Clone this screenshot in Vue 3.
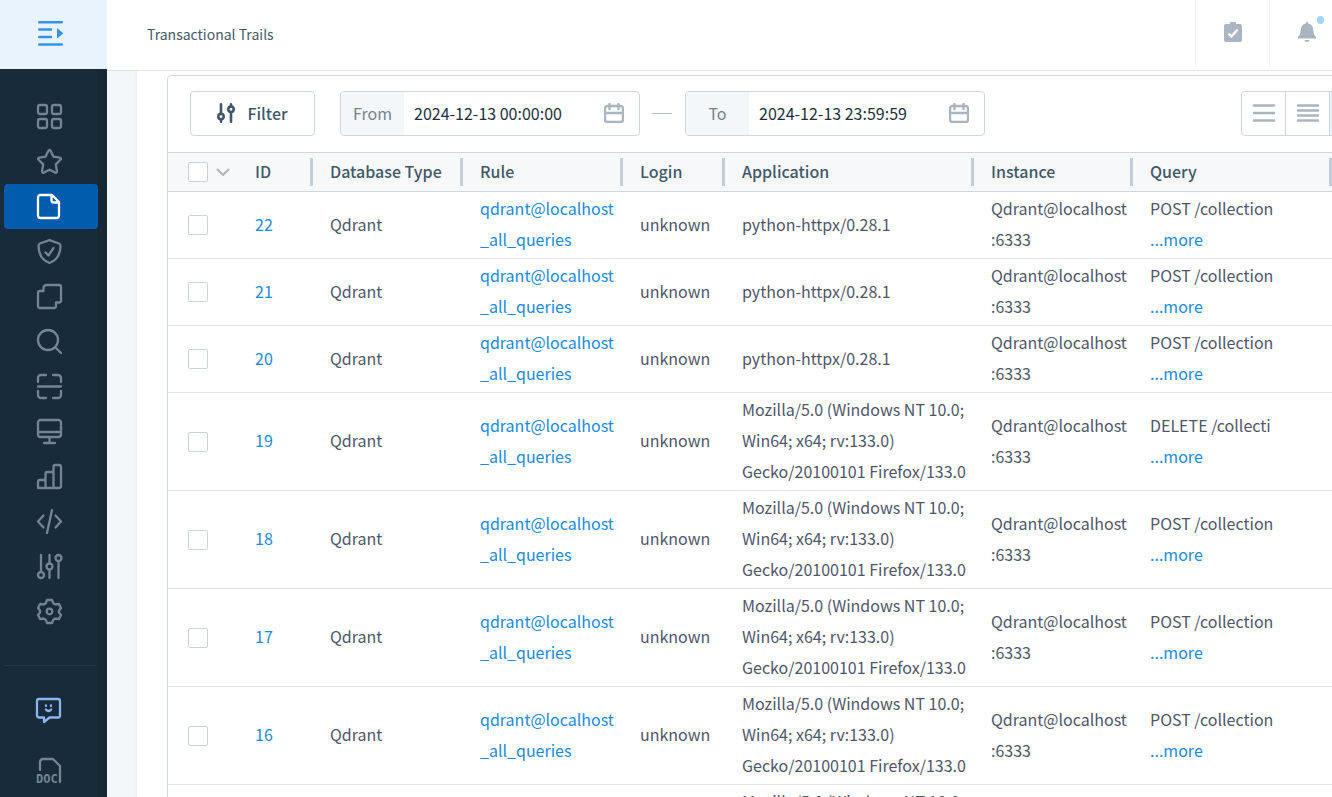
<script setup>
import { ref } from 'vue'

const nav = [
  { name: 'Dashboard', d: 'M3 1h5a2 2 0 0 1 2 2v5a2 2 0 0 1-2 2H3a2 2 0 0 1-2-2V3a2 2 0 0 1 2-2zM17 1h5a2 2 0 0 1 2 2v5a2 2 0 0 1-2 2h-5a2 2 0 0 1-2-2V3a2 2 0 0 1 2-2zM3 15h5a2 2 0 0 1 2 2v5a2 2 0 0 1-2 2H3a2 2 0 0 1-2-2v-5a2 2 0 0 1 2-2zM17 15h5a2 2 0 0 1 2 2v5a2 2 0 0 1-2 2h-5a2 2 0 0 1-2-2v-5a2 2 0 0 1 2-2z' },
  { name: 'Favorites', d: 'M11.4 1.8Q12.5 0.2 13.6 1.8L16.4 7.6L22.8 8.6Q24.8 9.2 23.4 10.8L18.8 15.4L19.9 22Q20 24.5 18 23.6L12.5 20.7L7 23.6Q5 24.5 5.1 22L6.2 15.4L1.6 10.8Q0.2 9.2 2.2 8.6L8.6 7.6Z' },
  { name: 'Trails', d: 'M3.500 1H15L22 8V21.500a2.500 2.500 0 0 1-2.500 2.500H3.500A2.500 2.500 0 0 1 1 21.500V3.500A2.500 2.500 0 0 1 3.500 1zM14.500 1V6.500a2 2 0 0 0 2 2H22', active: true },
  { name: 'Security', d: 'M12.500 1.200L22 4.500Q23.500 5 23.500 7C23.500 15 20 21 12.500 24C5 21 1.500 15 1.500 7Q1.500 5 3 4.500ZM8.500 13.500l3 3L16.500 9' },
  { name: 'Copies', d: 'M9.500 1H22a2 2 0 0 1 2 2V16.500a2 2 0 0 1-2 2H19V22a2 2 0 0 1-2 2H3a2 2 0 0 1-2-2V9a2 2 0 0 1 2-2H6.500V4A3 3 0 0 1 9.500 1z' },
  { name: 'Search', d: 'M21 11a10 10 0 1 1-20 0a10 10 0 0 1 20 0zM18.200 18.200L24 24' },
  { name: 'Scan', d: 'M1 8V4a3 3 0 0 1 3-3H9M16 1h5a3 3 0 0 1 3 3V8M24 17v4a3 3 0 0 1-3 3H16M9 24H4a3 3 0 0 1-3-3V17M1 12.500H24' },
  { name: 'Monitoring', d: 'M3.500 1H21.500A2.500 2.500 0 0 1 24 3.500V15.500A2.500 2.500 0 0 1 21.500 18H3.500A2.500 2.500 0 0 1 1 15.500V3.500A2.500 2.500 0 0 1 3.500 1zM1 13H24M12.500 18V24M7 24H18' },
  { name: 'Reports', d: 'M1 24V18a2 2 0 0 1 2-2H8.500V24M8.500 24V10a2 2 0 0 1 2-2H16.500V24M16.500 24V3a2 2 0 0 1 2-2H22a2 2 0 0 1 2 2V22a2 2 0 0 1-2 2H3a2 2 0 0 1-2-2' },
  { name: 'Scripts', d: 'M6.500 6.500L1 12.500L6.500 18.500M18.500 6.500L24 12.500L18.500 18.500M15 1L10 24' },
  { name: 'Tuning', d: 'M4 1V18M7 21a3 3 0 1 1-6 0a3 3 0 0 1 6 0zM12.500 1V9.500M12.500 15.500V24M15.500 12.500a3 3 0 1 1-6 0a3 3 0 0 1 6 0zM21.500 7V24M24.500 4a3 3 0 1 1-6 0a3 3 0 0 1 6 0z' },
  { name: 'Settings', d: 'M10 1H15L16.200 4.200L18.500 5.500L21.800 4.900L24 9L22 11.500V13.500L24 16L21.800 20.100L18.500 19.500L16.200 20.800L15 24H10L8.800 20.800L6.500 19.500L3.200 20.100L1 16L3 13.500V11.500L1 9L3.200 4.900L6.500 5.500L8.800 4.200ZM15.300 12.500a2.800 2.800 0 1 1-5.600 0a2.800 2.800 0 0 1 5.600 0z' },
]

const columns = ['Database Type', 'Rule', 'Login', 'Application', 'Instance', 'Query']

const httpx = ['python-httpx/0.28.1']
const firefox = ['Mozilla/5.0 (Windows NT 10.0;', 'Win64; x64; rv:133.0)', 'Gecko/20100101 Firefox/133.0']
const rows = [
  { id: 22, app: httpx, query: 'POST /collection' },
  { id: 21, app: httpx, query: 'POST /collection' },
  { id: 20, app: httpx, query: 'POST /collection' },
  { id: 19, app: firefox, query: 'DELETE /collecti' },
  { id: 18, app: firefox, query: 'POST /collection' },
  { id: 17, app: firefox, query: 'POST /collection' },
  { id: 16, app: firefox, query: 'POST /collection' },
  { id: 15, app: firefox, query: 'POST /collection' },
]

const from = ref('2024-12-13 00:00:00')
const to = ref('2024-12-13 23:59:59')
</script>

<template>
  <div class="layout">
    <aside class="sidebar">
      <button class="toggle" aria-label="Expand menu">
        <svg width="25" height="25" viewBox="0 0 25 25" fill="none" stroke="currentColor" stroke-width="2.4" stroke-linecap="round">
          <path d="M1.200 1.200H23.800M1.200 8.500H13M1.200 16H13M1.200 23.500H23.800" />
          <path d="M19 7L25.500 12.300L19 17.600Z" fill="currentColor" stroke="none" />
        </svg>
      </button>
      <nav class="nav">
        <a v-for="n in nav" :key="n.name" href="#" class="nav-item" :class="{ active: n.active }" :aria-label="n.name">
          <svg width="25" height="25" viewBox="0 0 25 25"><path :d="n.d" /></svg>
        </a>
      </nav>
      <div class="extra">
        <a href="#" class="extra-item chat" aria-label="Chat">
          <svg width="25" height="25" viewBox="0 0 25 25">
            <path d="M3 1H22a2 2 0 0 1 2 2V17.500a2 2 0 0 1-2 2H13.500L8 24V19.500H3a2 2 0 0 1-2-2V3a2 2 0 0 1 2-2z" />
            <path d="M10 7.500v.500M15 7.500v.500M9.800 11.500q2.700 3 5.400 0" />
          </svg>
        </a>
        <a href="#" class="extra-item" aria-label="Documentation">
          <svg width="25" height="25" viewBox="0 0 25 25">
            <path d="M4 12V4a3 3 0 0 1 3-3H17L24 8V24" />
            <text x="0" y="25" class="doc">DOC</text>
          </svg>
        </a>
      </div>
    </aside>

    <div class="main">
      <header class="topbar">
        <h1 class="title">Transactional Trails</h1>
        <button class="top-btn" aria-label="Tasks">
          <svg width="18" height="20" viewBox="0 0 18 20">
            <path d="M2 2H6a3 3 0 0 1 6 0H16a2 2 0 0 1 2 2V18a2 2 0 0 1-2 2H2a2 2 0 0 1-2-2V4a2 2 0 0 1 2-2z" fill="currentColor" />
            <path d="M4.500 11.500L7.500 14.500L13.500 7.500" fill="none" stroke="#fff" stroke-width="2.400" />
          </svg>
        </button>
        <button class="top-btn" aria-label="Notifications">
          <svg width="18" height="20" viewBox="0 0 18 20" fill="currentColor">
            <path d="M9 0Q10 0 10.300 1.400Q15 2.500 15.300 8C15.500 12 16.500 13.500 18 15V16.500H0V15C1.500 13.500 2.500 12 2.700 8Q3 2.500 7.700 1.400Q8 0 9 0zM6.500 18H11.500Q11 20 9 20T6.500 18z" />
          </svg>
          <span class="dot"></span>
        </button>
      </header>

      <main class="content">
        <section class="card">
          <div class="panel">
            <div class="toolbar">
              <button class="filter">
                <svg width="18" height="20" viewBox="0 0 18 20" fill="none" stroke="currentColor" stroke-width="2.600" stroke-linecap="round">
                  <path d="M4 1.300V10.500M4 16.800V18.700M14 1.300V3M14 9.500V18.700" />
                  <circle cx="4" cy="13.600" r="2.700" />
                  <circle cx="14" cy="6.300" r="2.700" />
                </svg>
                Filter
              </button>
              <div class="date">
                <label for="from">From</label>
                <input id="from" v-model="from" type="text" />
                <svg width="20" height="20" viewBox="0 0 20 20" class="cal"><path d="M3.500 3H16.500A2.500 2.500 0 0 1 19 5.500V16.500A2.500 2.500 0 0 1 16.500 19H3.500A2.500 2.500 0 0 1 1 16.500V5.500A2.500 2.500 0 0 1 3.500 3zM1 10H19M5.500 1V6M14.500 1V6" /></svg>
              </div>
              <span class="dash"></span>
              <div class="date">
                <label for="to">To</label>
                <input id="to" v-model="to" type="text" />
                <svg width="20" height="20" viewBox="0 0 20 20" class="cal"><path d="M3.500 3H16.500A2.500 2.500 0 0 1 19 5.500V16.500A2.500 2.500 0 0 1 16.500 19H3.500A2.500 2.500 0 0 1 1 16.500V5.500A2.500 2.500 0 0 1 3.500 3zM1 10H19M5.500 1V6M14.500 1V6" /></svg>
              </div>
              <div class="density">
                <button aria-label="Comfortable rows">
                  <svg width="24" height="20" viewBox="0 0 24 20"><path d="M2 2.500H22M2 10H22M2 17.500H22" /></svg>
                </button>
                <button aria-label="Compact rows">
                  <svg width="24" height="20" viewBox="0 0 24 20"><path d="M2 2.500H22M2 7.500H22M2 12.500H22M2 17.500H22" /></svg>
                </button>
                <button class="on" aria-label="Dense rows">
                  <svg width="24" height="20" viewBox="0 0 24 20"><path d="M2 2H22M2 6H22M2 10H22M2 14H22M2 18H22" /></svg>
                </button>
              </div>
            </div>

            <table>
              <colgroup>
                <col class="c-check" /><col class="c-id" /><col class="c-type" /><col class="c-rule" /><col class="c-login" />
                <col class="c-app" /><col class="c-inst" /><col /><col class="c-end" />
              </colgroup>
              <thead>
                <tr>
                  <th class="check">
                    <div class="pick">
                      <input type="checkbox" aria-label="Select all" />
                      <svg width="14" height="8" viewBox="0 0 14 8"><path d="M1 1L7 7L13 1" /></svg>
                    </div>
                  </th>
                  <th class="sep">ID</th>
                  <th v-for="c in columns" :key="c" class="sep">{{ c }}</th>
                  <th></th>
                </tr>
              </thead>
              <tbody>
                <tr v-for="r in rows" :key="r.id">
                  <td class="check"><div class="pick"><input type="checkbox" :aria-label="'Select ' + r.id" /></div></td>
                  <td><a href="#">{{ r.id }}</a></td>
                  <td>Qdrant</td>
                  <td><a href="#">qdrant@localhost<br />_all_queries</a></td>
                  <td>unknown</td>
                  <td><div v-for="line in r.app" :key="line">{{ line }}</div></td>
                  <td>Qdrant@localhost<br />:6333</td>
                  <td>{{ r.query }}<br /><a href="#">...more</a></td>
                  <td></td>
                </tr>
              </tbody>
            </table>
          </div>
        </section>
      </main>
    </div>
  </div>
</template>

<style>
body {
  margin: 0;
  overflow: hidden;
}
</style>

<style scoped>
.layout {
  display: flex;
  height: 100vh;
  overflow: hidden;
  font-family: "Noto Sans CJK SC", "Noto Sans", sans-serif;
  font-size: 16px;
  color: #50566a;
  background: #fff;
}
button,
input {
  font: inherit;
  color: inherit;
  margin: 0;
}
button {
  padding: 0;
  border: 0;
  background: none;
  cursor: pointer;
}
a {
  color: #1b8ade;
  text-decoration: none;
}

.sidebar {
  display: flex;
  flex-direction: column;
  flex: none;
  width: 107px;
  background: linear-gradient(90deg, #182b3a 97px, #162833 97px);
}
.toggle {
  flex: none;
  height: 69px;
  padding: 0 7px 2px 0;
  background: #e8f3fe;
  color: #3095ea;
}
.toggle svg {
  display: block;
  margin: 0 auto;
}
.nav {
  padding: 25px 9px 31px 4px;
}
.nav-item {
  display: flex;
  align-items: center;
  justify-content: center;
  height: 45px;
  padding-right: 3px;
  border-radius: 4px;
}
.nav-item.active {
  background: #025cae;
  color: #fff;
}
.nav-item svg,
.extra-item svg {
  overflow: visible;
  fill: none;
  stroke: #738594;
  stroke-width: 2.3;
  stroke-linecap: round;
  stroke-linejoin: round;
}
.nav-item.active svg {
  stroke: #fff;
}
.extra {
  display: flex;
  flex-direction: column;
  align-items: center;
  gap: 35px;
  flex: 1;
  margin: 0 10px 0 4px;
  padding: 32px 4px 0 0;
  border-top: 1px solid #20364e;
}
.extra-item {
  display: flex;
}
.extra-item.chat svg {
  stroke: #8ab4f3;
}
.extra-item .doc {
  font: bold 12px "DejaVu Sans Mono", monospace;
  fill: #738594;
  stroke: none;
}

.main {
  display: flex;
  flex-direction: column;
  flex: 1;
  min-width: 0;
  overflow: hidden;
}
.topbar {
  display: flex;
  flex: none;
  height: 70px;
  margin-right: -11px;
  border-bottom: 1px solid #dfe3e7;
}
.title {
  flex: 1;
  margin: 0;
  padding-left: 40px;
  font-size: 14px;
  font-weight: 400;
  line-height: 68px;
  color: #465a69;
}
.top-btn {
  position: relative;
  width: 74px;
  height: 66px;
  padding-bottom: 2px;
  border-left: 1px solid #eceff1;
  color: #a9b5c0;
}
.top-btn svg {
  display: block;
  margin: 0 auto;
}
.dot {
  position: absolute;
  top: 16px;
  right: 19px;
  width: 7px;
  height: 8px;
  border-radius: 50%;
  background: #a3d2fc;
}

.content {
  flex: 1;
  min-height: 0;
  padding-left: 30px;
  overflow: hidden;
  background: #f4f7f9;
}
.card {
  min-height: 100%;
  padding: 4px 0 0 30px;
  background: #fff;
  box-shadow: 0 0 4px #dfe5e9;
}
.panel {
  margin-right: -67px;
  border: 1px solid #d0d8df;
  border-radius: 4px;
}
.toolbar {
  display: flex;
  align-items: center;
  box-sizing: border-box;
  height: 76px;
  padding: 0 24px 2px 22px;
}
.filter {
  display: flex;
  align-items: center;
  justify-content: center;
  gap: 12px;
  width: 125px;
  height: 45px;
  margin-right: 25px;
  border: 1px solid #cdd6dc;
  border-radius: 4px;
  font-weight: 500;
  color: #42586a;
}
.date {
  display: flex;
  align-items: center;
  box-sizing: border-box;
  width: 300px;
  height: 45px;
  padding-right: 15px;
  border: 1px solid #cdd6dc;
  border-radius: 4px;
  overflow: hidden;
}
.date label {
  width: 63px;
  line-height: 43px;
  text-align: center;
  background: #f4f7fa;
  color: #75838f;
}
.date input {
  flex: 1;
  min-width: 0;
  padding: 0 0 0 10px;
  border: 0;
  outline: 0;
  background: none;
  color: #1d2f3e;
}
.cal {
  fill: none;
  stroke: #a9b5c0;
  stroke-width: 2.4;
  stroke-linecap: round;
}
.dash {
  width: 20px;
  height: 1px;
  margin: 0 13px 0 12px;
  background: #b4c0c9;
}
.density {
  display: flex;
  margin-left: auto;
  border: 1px solid #cdd6dc;
  border-radius: 4px;
}
.density button {
  display: flex;
  align-items: center;
  justify-content: center;
  width: 43px;
  height: 43px;
}
.density button + button {
  width: 44px;
  border-left: 1px solid #cdd6dc;
}
.density .on {
  background: #e8f3fe;
}
.density svg {
  fill: none;
  stroke: #a9b5c0;
  stroke-width: 2.6;
  stroke-linecap: round;
}

table {
  width: 100%;
  table-layout: fixed;
  border-collapse: separate;
  border-spacing: 0;
}
.c-check { width: 69px; }
.c-id { width: 75px; }
.c-type { width: 150px; }
.c-rule { width: 160px; }
.c-login { width: 102px; }
.c-app { width: 249px; }
.c-inst { width: 159px; }
.c-end { width: 67px; }
th,
td {
  padding: 1px 0 3px 18px;
  text-align: left;
  vertical-align: middle;
  white-space: nowrap;
  line-height: 31px;
  border-bottom: 1px solid #e2e6ea;
}
th {
  position: relative;
  padding: 2px 0 4px 18px;
  line-height: 32px;
  font-weight: 500;
  color: #42586a;
  background: #f6f8fa;
  border-top: 1px solid #cfd8df;
  border-bottom-color: #cfd8df;
}
.sep::after {
  content: "";
  position: absolute;
  top: 5px;
  right: -1px;
  z-index: 1;
  width: 3px;
  height: 28px;
  background: #c3cedb;
}
.check {
  padding: 3px 0 3px 20px;
}
.pick {
  display: flex;
  align-items: center;
  gap: 8px;
}
.pick input {
  appearance: none;
  width: 20px;
  height: 20px;
  border: 1px solid #c9d3dc;
  border-radius: 2px;
  background: #fff;
}
.pick svg {
  fill: none;
  stroke: #a9b5c0;
  stroke-width: 2;
}
</style>
